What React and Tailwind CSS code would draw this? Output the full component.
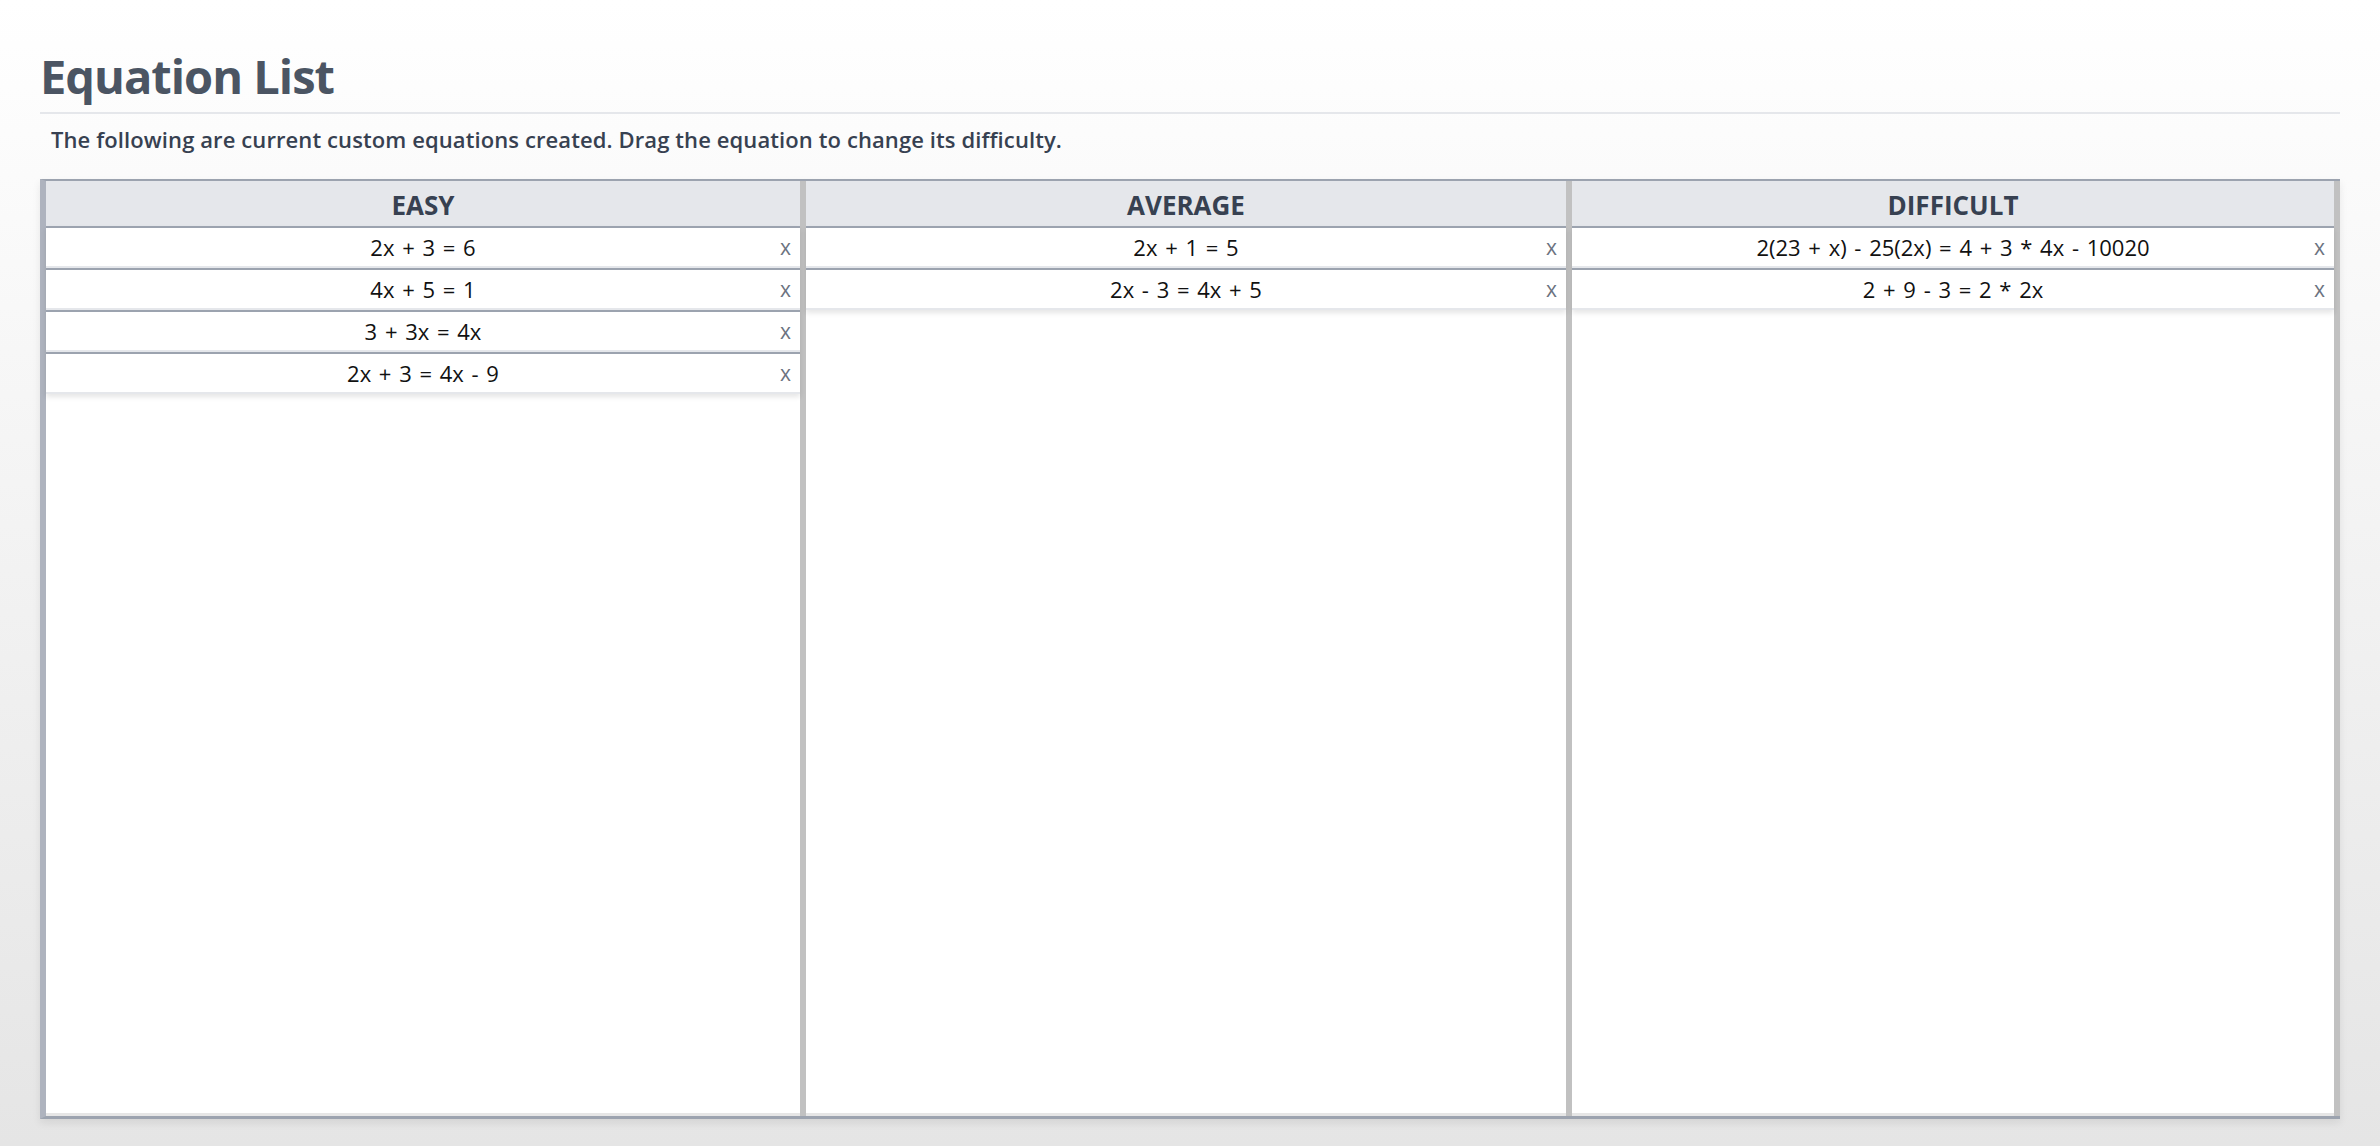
import React from "react";

const columns = [
  { title: "EASY", items: ["2x + 3 = 6", "4x + 5 = 1", "3 + 3x = 4x", "2x + 3 = 4x - 9"] },
  { title: "AVERAGE", items: ["2x + 1 = 5", "2x - 3 = 4x + 5"] },
  { title: "DIFFICULT", items: ["2(23 + x) - 25(2x) = 4 + 3 * 4x - 10020", "2 + 9 - 3 = 2 * 2x"] },
];

function Column({ title, items }) {
  return (
    <div className="flex flex-col border-r-[6px] border-[#c1c1c1] bg-white">
      <div className="h-[45px] shrink-0 flex items-center justify-center bg-[#e5e7eb] pt-[2px]">
        <span className="text-[26px] leading-[32px] font-bold text-[#374151]">{title}</span>
      </div>
      <div className="flex flex-col shadow-[0_3px_5px_rgba(0,0,0,0.10)]">
        {items.map((eq) => (
          <div
            key={eq}
            className="relative h-[42px] flex items-center justify-center bg-white border-t-2 border-b-2 border-t-[#9ca3af] border-b-[#e5e7eb]"
          >
            <span className="text-[22px] leading-[28px] text-[#111111] [word-spacing:2px]">{eq}</span>
            <span className="absolute right-[9px] top-1/2 -translate-y-1/2 text-[21px] leading-[28px] text-[#6b7280]">x</span>
          </div>
        ))}
      </div>
      <div className="flex-1 border-b-[3px] border-[#e6e6e6]" />
    </div>
  );
}

export default function App() {
  return (
    <div
      className="h-screen w-full bg-gradient-to-b from-white to-[#e5e5e5] px-10 pt-[52px]"
      style={{ fontFamily: '"Open Sans", "Noto Sans", sans-serif' }}
    >
      <h1 className="text-[47px] leading-[48px] font-bold tracking-[-1px] text-[#4b5563]">Equation List</h1>
      <div className="mt-[12px] h-[2px] bg-[#e5e7eb]" />
      <p className="mt-[11px] pl-[11px] text-[22px] leading-[28px] font-semibold tracking-[0.1px] text-[#374151]">
        The following are current custom equations created. Drag the equation to change its difficulty.
      </p>
      <div className="mt-[26px] h-[940px] grid grid-cols-[760px_766px_768px] border-t-2 border-b-[3px] border-l-[6px] border-t-[#9ca3af] border-b-[#9ca3af] border-l-[#aeb3be] shadow-[0_4px_8px_rgba(0,0,0,0.08)]">
        {columns.map((c) => (
          <Column key={c.title} {...c} />
        ))}
      </div>
    </div>
  );
}
